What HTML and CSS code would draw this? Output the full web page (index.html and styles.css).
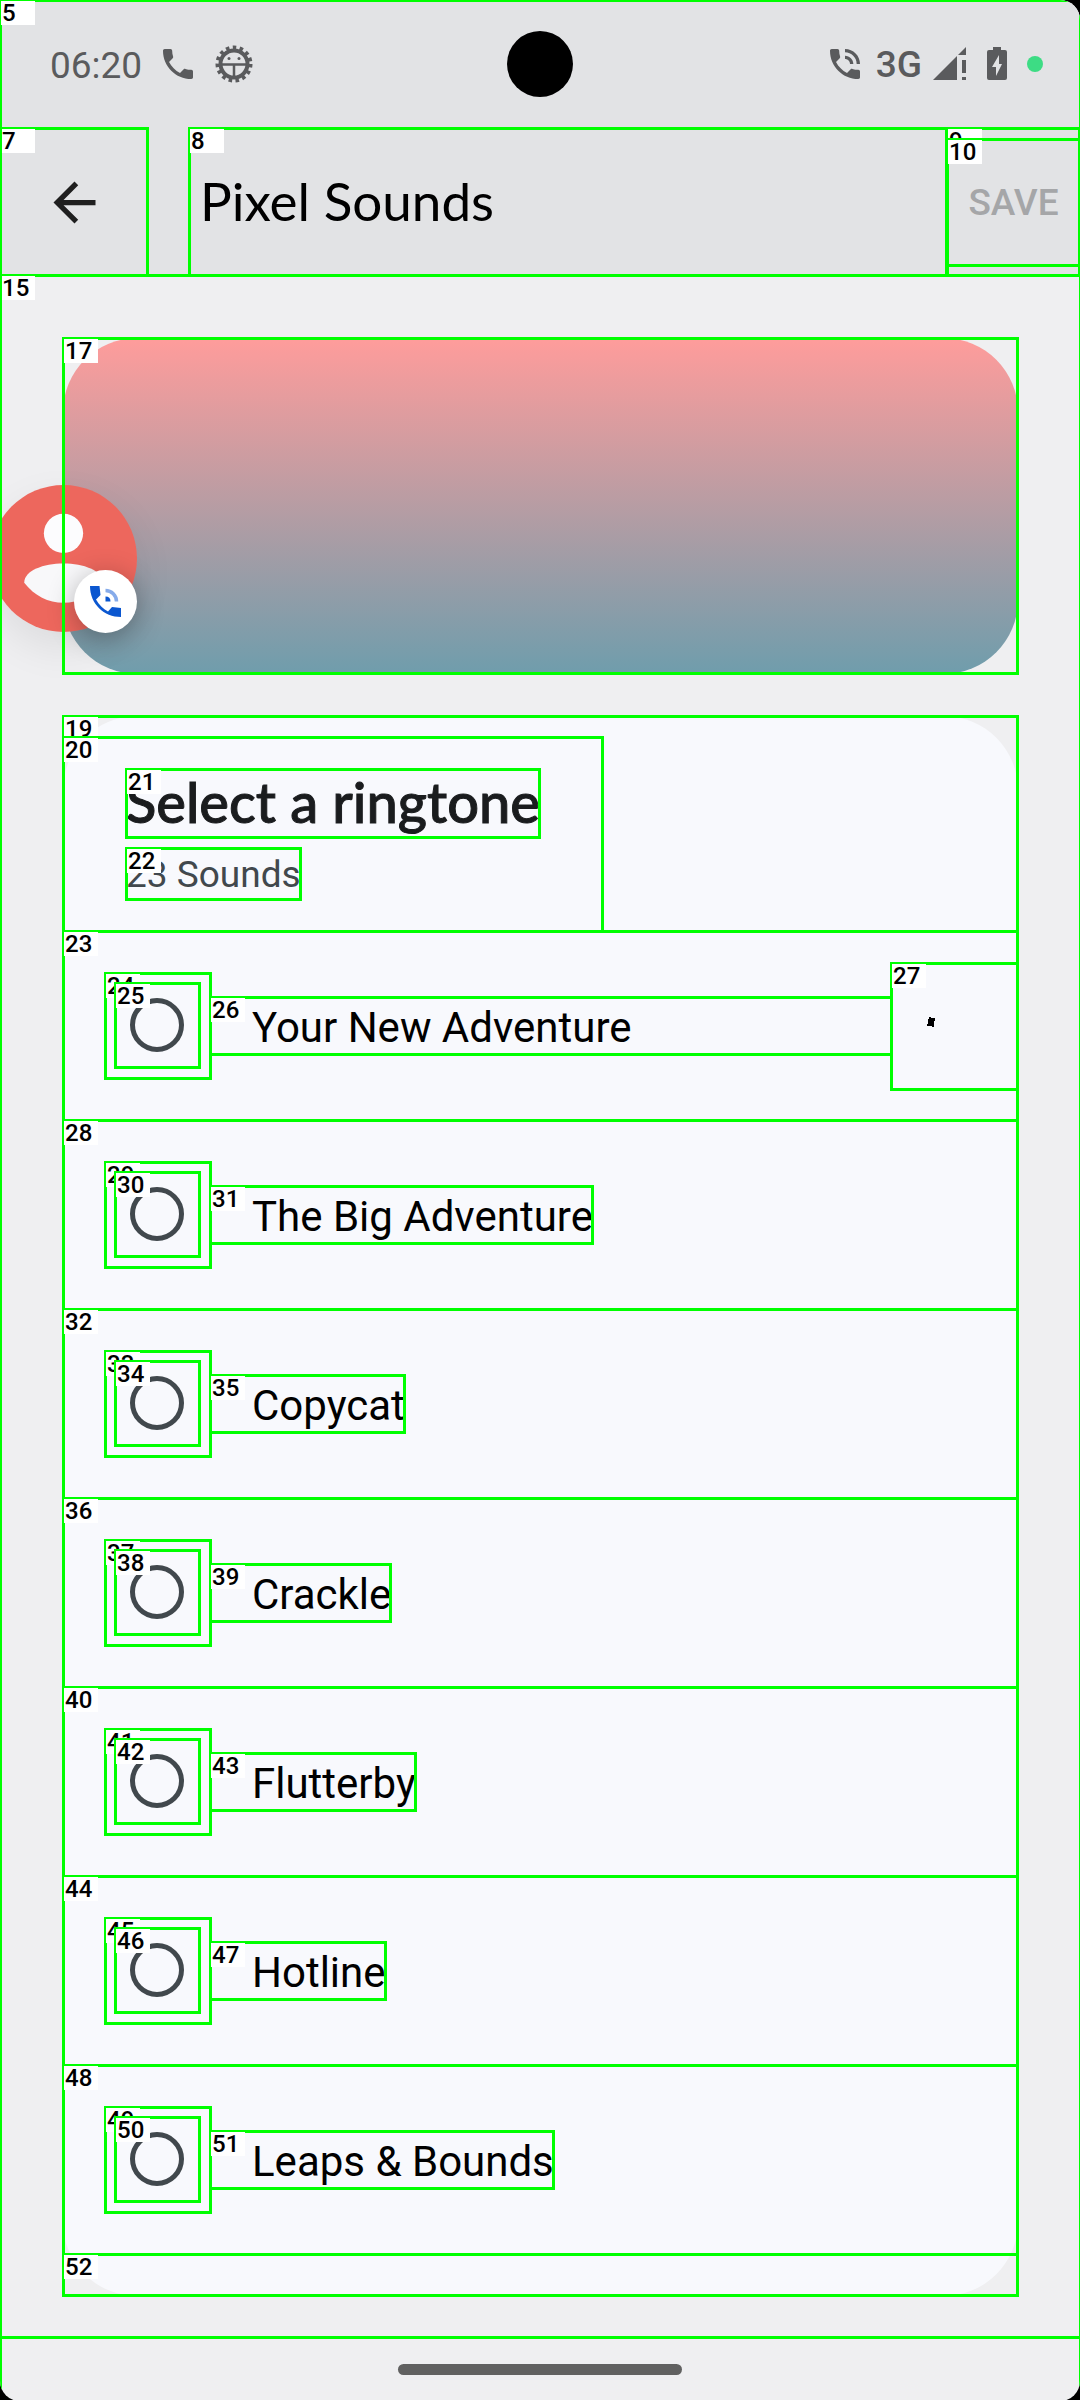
FILE: index.html
```html
<!DOCTYPE html>
<html lang="en">
<head>
<meta charset="utf-8">
<meta name="viewport" content="width=device-width, initial-scale=1">
<title>Pixel Sounds</title>
<link rel="stylesheet" href="styles.css">
</head>
<body>
<div class="screen">
  <header class="top">
    <div class="status">
      <div class="status-group">
        <span class="clock">06:20</span>
        <svg class="icon" viewBox="0 0 24 24"><path d="M6.620 10.790c1.440 2.830 3.760 5.140 6.590 6.590l2.200-2.200c.27-.27.67-.36 1.020-.24 1.120.37 2.330.57 3.570.57.55 0 1 .45 1 1V20c0 .55-.45 1-1 1-9.390 0-17-7.610-17-17 0-.55.45-1 1-1h3.500c.55 0 1 .45 1 1 0 1.250.2 2.450.57 3.570.11.35.03.74-.25 1.020l-2.200 2.200z"/></svg>
        <svg class="icon" viewBox="0 0 40 40">
          <g fill="none" stroke="#5a5b5d">
            <circle cx="20" cy="20" r="16.500" stroke-width="4" stroke-dasharray="3.500 3.411"/>
            <circle cx="20" cy="20" r="13.500" stroke-width="4"/>
            <path d="M7 20.500h26M20 21v12" stroke-width="2.500"/>
          </g>
          <circle cx="15" cy="14.500" r="1.500"/><circle cx="25" cy="14.500" r="1.500"/>
        </svg>
      </div>
      <span class="camera"></span>
      <div class="status-group status-end">
        <svg class="icon" viewBox="0 0 24 24"><path d="M20 15.500c-1.250 0-2.450-.2-3.570-.570-.350-.110-.740-.030-1.020.240l-2.200 2.200c-2.830-1.440-5.150-3.750-6.590-6.590l2.200-2.210c.28-.26.36-.65.25-1C8.700 6.450 8.500 5.250 8.500 4c0-.55-.45-1-1-1H4c-.55 0-1 .45-1 1 0 9.390 7.610 17 17 17 .55 0 1-.45 1-1v-3.500c0-.55-.45-1-1-1zM19 12h2c0-4.970-4.030-9-9-9v2c3.870 0 7 3.130 7 7zm-4 0h2c0-2.760-2.240-5-5-5v2c1.660 0 3 1.340 3 3z"/></svg>
        <span class="network">3G</span>
        <svg class="icon signal" viewBox="0 0 34 34"><path d="M0 33 24 9v24zM25 8l8-8v8zM29 13h4v13h-4zM29 30h4v3h-4z"/></svg>
        <svg class="icon battery" viewBox="0 0 20 34"><path fill-rule="evenodd" d="M6 0h8v3h4q2 0 2 2v26q0 2-2 2H2q-2 0-2-2V5q0-2 2-2h4zM12 8 5 20h4v9l6-12h-3z"/></svg>
        <span class="dot"></span>
      </div>
    </div>
    <div class="appbar">
      <button class="box back" aria-label="Back"><span class="tag">7</span>
        <svg viewBox="0 0 24 24"><path d="M20 11H7.830l5.590-5.590L12 4l-8 8 8 8 1.410-1.410L7.830 13H20z"/></svg>
      </button>
      <h1 class="box title"><span class="tag">8</span>Pixel Sounds</h1>
      <div class="box actions"><span class="tag">9</span>
        <button class="box save" disabled><span class="tag">10</span>SAVE</button>
      </div>
    </div>
  </header>

  <main class="content">
    <div class="box hero"><span class="tag">17</span>
      <div class="bubble">
        <svg viewBox="0 0 146 146">
          <circle cx="73" cy="73" r="73" fill="#ed675d"/>
          <circle cx="73" cy="48" r="19.500" fill="#fcfcfe"/>
          <path d="M34 97C34 85 53 78 73 78s39 7 39 19c-10 13-24 20-39 20s-29-7-39-20z" fill="#f8f8fa"/>
        </svg>
        <span class="call">
          <svg viewBox="0 0 32 32"><path fill="#0b57d0" d="M0 0h9.500l1 9-4.500 4.500c3 5.500 7 9 12 12l4-4.500 9 1V31C14 31 0 18 0 0zM15.500 10.500q5 0 5 5h-5z"/><path fill="none" stroke="#86abea" stroke-width="3.500" d="M15.500 4.500a11 11 0 0 1 11 11"/></svg>
        </span>
      </div>
    </div>

    <section class="box card"><span class="tag">19</span>
      <div class="box heading"><span class="tag">20</span>
        <h2 class="box"><span class="tag">21</span>Select a ringtone</h2>
        <p class="box"><span class="tag">22</span>23 Sounds</p>
      </div>
      <div class="box row"><span class="tag">23</span>
        <div class="box ring"><span class="tag">24</span><div class="box pick"><span class="tag">25</span><input type="radio" name="tone" id="t1"></div></div>
        <label class="box name wide" for="t1"><span class="tag">26</span>Your New Adventure</label>
        <div class="box playing"><span class="tag">27</span><svg viewBox="0 0 8 10"><path d="M2 0h2v1h4v3H7v6H5V9H0V7h1V2h1z"/></svg></div>
      </div>
      <div class="box row"><span class="tag">28</span>
        <div class="box ring"><span class="tag">29</span><div class="box pick"><span class="tag">30</span><input type="radio" name="tone" id="t2"></div></div>
        <label class="box name" for="t2"><span class="tag">31</span>The Big Adventure</label>
      </div>
      <div class="box row"><span class="tag">32</span>
        <div class="box ring"><span class="tag">33</span><div class="box pick"><span class="tag">34</span><input type="radio" name="tone" id="t3"></div></div>
        <label class="box name" for="t3"><span class="tag">35</span>Copycat</label>
      </div>
      <div class="box row"><span class="tag">36</span>
        <div class="box ring"><span class="tag">37</span><div class="box pick"><span class="tag">38</span><input type="radio" name="tone" id="t4"></div></div>
        <label class="box name" for="t4"><span class="tag">39</span>Crackle</label>
      </div>
      <div class="box row"><span class="tag">40</span>
        <div class="box ring"><span class="tag">41</span><div class="box pick"><span class="tag">42</span><input type="radio" name="tone" id="t5"></div></div>
        <label class="box name" for="t5"><span class="tag">43</span>Flutterby</label>
      </div>
      <div class="box row"><span class="tag">44</span>
        <div class="box ring"><span class="tag">45</span><div class="box pick"><span class="tag">46</span><input type="radio" name="tone" id="t6"></div></div>
        <label class="box name" for="t6"><span class="tag">47</span>Hotline</label>
      </div>
      <div class="box row"><span class="tag">48</span>
        <div class="box ring"><span class="tag">49</span><div class="box pick"><span class="tag">50</span><input type="radio" name="tone" id="t7"></div></div>
        <label class="box name" for="t7"><span class="tag">51</span>Leaps &amp; Bounds</label>
      </div>
      <div class="box row-end"><span class="tag">52</span></div>
    </section>
    <div class="frame list-frame"><span class="tag">15</span></div>
  </main>

  <footer class="nav"><span class="pill"></span></footer>
  <div class="frame"><span class="tag">5</span></div>
</div>
</body>
</html>
```
FILE: styles.css
```css
* { box-sizing: border-box; }

html { background: #000; }

body {
  margin: 0;
  font-family: Roboto, "Liberation Sans", sans-serif;
  color: #000;
}

h1, h2, p { margin: 0; font-weight: 400; }

button {
  border: 0;
  padding: 0;
  background: none;
  font: inherit;
  color: inherit;
}

.screen {
  position: relative;
  display: flex;
  flex-direction: column;
  min-height: 100vh;
  overflow: hidden;
  background: #efeff1;
  border-radius: 0 20px 20px 20px;
}

/* Outlined regions with a numbered tag in the corner */
.box {
  position: relative;
  outline: 3px solid #0f0;
  outline-offset: -2px;
}

.tag {
  position: absolute;
  top: 1px;
  left: 1px;
  width: 34px;
  height: 24px;
  padding-left: 1px;
  background: #fff;
  color: #000;
  font: 500 24px/24px Roboto, sans-serif;
  text-align: left;
}

.frame {
  position: absolute;
  inset: 0;
  border: 2px solid #0f0;
  border-width: 2px 1px 1px 2px;
  pointer-events: none;
}

.frame .tag { top: -1px; left: -1px; }

.list-frame {
  inset: -1px 0;
  border-width: 3px 1px 3px 2px;
}

/* Status bar */
.top { background: #e2e3e5; }

.status {
  display: grid;
  grid-template-columns: 1fr 66px 1fr;
  align-items: center;
  height: 128px;
  padding: 0 37px;
  color: #5a5b5d;
}

.status-group {
  display: flex;
  align-items: center;
  gap: 16px;
  padding-left: 13px;
}

.status-end { justify-content: flex-end; gap: 20px; }

.clock { font-size: 37px; line-height: 48px; padding-top: 4px; }
.network { margin: 0 -9px; font-size: 37px; font-weight: 500; }

.icon { width: 40px; height: 40px; fill: #5a5b5d; }
.signal { width: 34px; height: 34px; }
.battery { width: 20px; height: 34px; }

.camera { height: 66px; border-radius: 50%; background: #000; }

.dot { width: 16px; height: 16px; border-radius: 50%; background: #3ddc84; }

/* App bar */
.appbar { display: flex; align-items: flex-start; height: 147px; }

.back {
  display: grid;
  place-items: center;
  width: 148px;
  height: 148px;
}

.back svg { width: 63px; height: 63px; fill: #1f1f1f; }

.title {
  flex: 1;
  margin-left: 41px;
  padding-left: 11px;
  height: 148px;
  font: 400 53px/146px Lato, sans-serif;
}

.actions { display: flex; align-items: center; height: 148px; width: 133px; }

.save {
  width: 133px;
  height: 127px;
  color: #a5a6a8;
  font-size: 37px;
  font-weight: 500;
}

/* Content */
.content {
  position: relative;
  flex: 1;
  display: flex;
  flex-direction: column;
  gap: 42px;
  padding: 63px 62px 42px 63px;
}

.hero {
  isolation: isolate;
  height: 336px;
  border-radius: 74px;
  background: linear-gradient(#ff9c9b, #6f9dac);
}

.hero, .card { outline: 0; }

/* Square outline around a rounded surface */
.hero::after, .card::before {
  content: "";
  position: absolute;
  inset: -1px;
  border: 3px solid #0f0;
  pointer-events: none;
}

.hero .tag { z-index: 1; }

.bubble {
  position: absolute;
  top: 147px;
  left: -73px;
  width: 147px;
  height: 147px;
  border-radius: 50%;
  box-shadow: 0 16px 40px rgba(0, 0, 0, .08);
}

.bubble svg { display: block; }

.call {
  position: absolute;
  right: 0;
  bottom: -1px;
  display: grid;
  place-items: center;
  width: 63px;
  height: 63px;
  border-radius: 50%;
  background: #fff;
  box-shadow: 0 6px 28px rgba(0, 0, 0, .3);
}

.call svg { width: 32px; height: 32px; }

.card {
  padding-top: 21px;
  border-radius: 74px;
  background: #f8f9fd;
}

.heading {
  display: flex;
  flex-direction: column;
  align-items: flex-start;
  gap: 10px;
  width: max-content;
  height: 195px;
  padding: 32px 63px;
  margin-bottom: -1px;
}

.heading h2 {
  height: 69px;
  color: #1a1c1e;
  font: 500 56px/66px Lato, sans-serif;
  -webkit-text-stroke: 1px #1a1c1e;
}

.heading h2 .tag { -webkit-text-stroke: 0; }

.heading p {
  height: 52px;
  color: #41484d;
  font-size: 37px;
  line-height: 54px;
}

.row {
  display: flex;
  align-items: center;
  height: 190px;
  margin-bottom: -1px;
  padding-left: 42px;
}

.row-end { height: 42px; }

.ring {
  width: 106px;
  height: 106px;
  padding: 10px;
}

.pick {
  width: 85px;
  height: 85px;
  padding: 15px;
}

.pick input {
  display: block;
  appearance: none;
  width: 54px;
  height: 54px;
  margin: 0;
  border: 5px solid #41484d;
  border-radius: 50%;
}

.name {
  height: 58px;
  margin-left: -1px;
  padding-left: 42px;
  font-size: 42px;
  line-height: 62px;
}

.wide { flex: 1; }

.playing { width: 127px; height: 127px; margin-left: -1px; padding: 54px 0 0 36px; }
.playing svg { display: block; width: 8px; height: 10px; }

/* Gesture bar */
.nav {
  display: grid;
  place-items: center;
  height: 63px;
}

.pill { width: 284px; height: 11px; border-radius: 6px; background: #616161; }
```
